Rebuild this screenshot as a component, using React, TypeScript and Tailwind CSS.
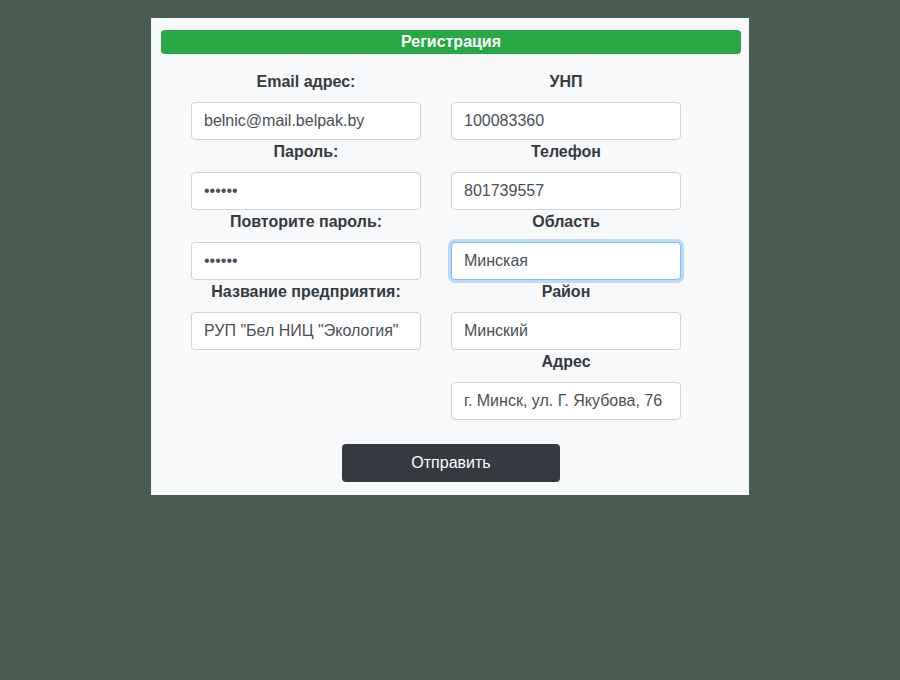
import React from 'react';

const font = { fontFamily: '"Liberation Sans", Arial, sans-serif' };

function Field({ label, value, type = 'text', focused = false }: { label: string; value: string; type?: string; focused?: boolean }) {
    return (
        <div className="flex flex-col">
            <label className="text-center text-[16px] leading-6 font-bold text-[#343a40] mb-2">{label}</label>
            <input
                type={type}
                defaultValue={value}
                readOnly
                className={`w-[230px] h-[38px] px-3 text-[16px] text-[#495057] bg-white rounded-[4px] outline-none border ${
                    focused
                        ? 'border-[#80bdff] shadow-[0_0_0_3px_rgba(0,123,255,0.25)]'
                        : 'border-[#ced4da]'
                }`}
                style={font}
            />
        </div>
    );
}

export default function App() {
    return (
        <div className="min-h-[680px] w-[900px] bg-[#4a5d53] pt-[18px]" style={font}>
            <div className="mx-auto w-[598px] bg-[#f8f9fa] pl-[10px] pr-[8px] pt-3 pb-[13px]">
                {/* Заголовок */}
                <div className="h-6 bg-[#28a745] rounded-[4px] text-white text-[16px] font-bold leading-6 text-center">
                    Регистрация
                </div>

                <div className="flex gap-[30px] pl-[30px] mt-[16px]">
                    <div className="flex flex-col">
                        <Field label="Email адрес:" value="belnic@mail.belpak.by" />
                        <Field label="Пароль:" value="123456" type="password" />
                        <Field label="Повторите пароль:" value="123456" type="password" />
                        <Field label="Название предприятия:" value={'РУП "Бел НИЦ "Экология"'} />
                    </div>
                    <div className="flex flex-col">
                        <Field label="УНП" value="100083360" />
                        <Field label="Телефон" value="801739557" />
                        <Field label="Область" value="Минская" focused />
                        <Field label="Район" value="Минский" />
                        <Field label="Адрес" value="г. Минск, ул. Г. Якубова, 76" />
                    </div>
                </div>

                <div className="flex justify-center mt-6">
                    <button className="w-[218px] h-[38px] bg-[#343a40] text-white text-[16px] rounded-[4px]" style={font}>
                        Отправить
                    </button>
                </div>
            </div>
        </div>
    );
}
